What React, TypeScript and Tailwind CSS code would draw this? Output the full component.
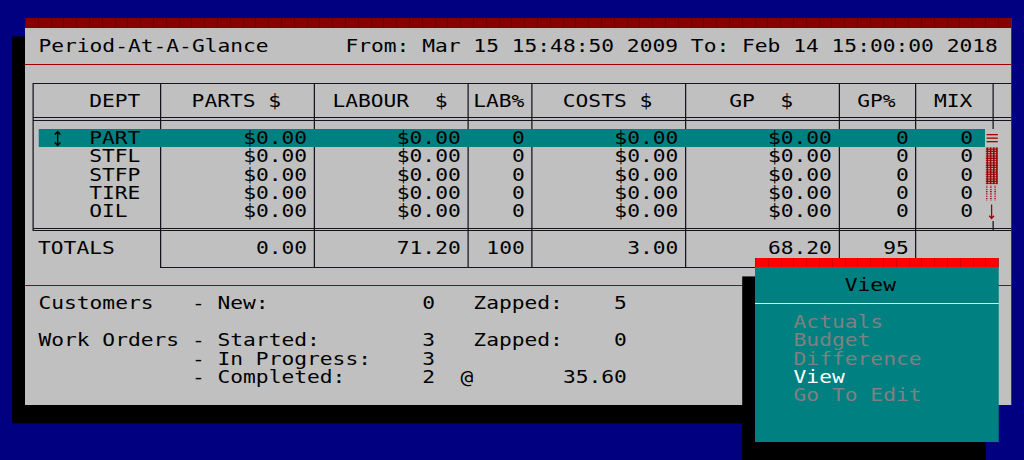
import clsx from "clsx";

// text-mode screen: 80x25 cells. Built at 10.24px per cell and stretched 1.25x wide,
// so every cell ends up 12.8 x 18.4 like the original.
const L = "border-[#17131d]";

const cols = [
  { w: "w-[102.4px]", head: "DEPT", hp: "pl-[44.8px]" },
  { w: "w-[122.88px]", head: "PARTS $", hp: "pl-[24.32px]" },
  { w: "w-[122.88px]", head: "LABOUR  $", hp: "pl-[14.08px]" },
  { w: "w-[51.2px]", head: "LAB%", hp: "pl-[3.84px]" },
  { w: "w-[122.88px]", head: "COSTS $", hp: "pl-[24.32px]" },
  { w: "w-[122.88px]", head: "GP  $", hp: "pl-[34.56px]" },
  { w: "w-[61.44px]", head: "GP%", hp: "pl-[14.08px]" },
  { w: "w-[62.72px]", head: "MIX", hp: "pl-[14.08px]" },
];

const depts = ["PART", "STFL", "STFP", "TIRE", "OIL"];
const totals = ["TOTALS", "0.00", "71.20", "100", "3.00", "68.20", "95", ""];

function RedRule() {
  return (
    <div className="h-[18.4px] shrink-0 pt-[8.6px]">
      <div className="h-[1.2px] bg-[#a00000]" />
    </div>
  );
}

// a strip of the table where only the column lines show
function LineStrip({ h, double }: { h: string; double?: boolean }) {
  return (
    <div className={clsx("flex", h, double && "border-y-[1.2px]", L)}>
      {cols.map((c, i) => (
        <div
          key={i}
          className={clsx(c.w, "border-l-[1.28px]", L, i === 7 && "border-r-[1.28px]")}
        />
      ))}
    </div>
  );
}

function UpDown() {
  return (
    <svg viewBox="0 0 12.8 18.4" preserveAspectRatio="none" className="h-[18.4px] w-[10.24px]">
      <path d="M6.4 2.6V16.4M3.6 5.4L6.4 2.6L9.2 5.4M3.6 13.6L6.4 16.4L9.2 13.6" stroke="#000" strokeWidth="1.4" fill="none" />
    </svg>
  );
}

function ScrollBar() {
  return (
    <svg
      viewBox="0 0 12.8 92"
      preserveAspectRatio="none"
      className="absolute left-[762.88px] top-[8px] h-[92px] w-[10.24px]"
    >
      <defs>
        <pattern id="dark" width="3.2" height="2.3" patternUnits="userSpaceOnUse">
          <rect width="3.2" height="2.3" fill="#9c0000" />
          <rect width="1.6" height="1.15" fill="#c0c0c0" />
        </pattern>
        <pattern id="light" width="4.27" height="2.3" patternUnits="userSpaceOnUse">
          <rect x="0.8" width="1.6" height="1.15" fill="#a00000" />
        </pattern>
      </defs>
      <rect width="12.8" height="92" fill="#c0c0c0" />
      <rect x="1.6" y="5" width="11.2" height="1.3" fill="#a00000" />
      <rect x="1.6" y="8.5" width="11.2" height="1.3" fill="#a00000" />
      <rect x="1.6" y="12" width="11.2" height="1.3" fill="#a00000" />
      <rect x="0.8" y="18.4" width="12" height="36.8" fill="url(#dark)" />
      <rect x="0.8" y="56.4" width="12" height="15" fill="url(#light)" />
      <path d="M6.6 75.5V89.5M4.2 86.8L6.6 89.5L9 86.8" stroke="#a00000" strokeWidth="1.3" fill="none" />
    </svg>
  );
}

function Table() {
  return (
    <div className="h-[202.4px] shrink-0 pl-[5.12px] pt-[9.2px]">
      {/* header */}
      <div className={clsx("flex h-[34.5px] border-t-[1.2px]", L)}>
        {cols.map((c, i) => (
          <div
            key={i}
            className={clsx(c.w, c.hp, "border-l-[1.28px] pt-[8px]", L, i === 7 && "border-r-[1.28px]")}
          >
            {c.head}
          </div>
        ))}
      </div>
      <LineStrip h="h-[3.5px]" double />

      {/* body */}
      <div className="relative">
        <LineStrip h="h-[8px]" />
        {depts.map((d, r) => {
          const sel = r === 0;
          return (
            <div key={d} className="relative flex h-[18.4px]">
              {sel && <div className="absolute inset-y-0 left-[5.12px] w-[757.76px] bg-[#008080]" />}
              <div className={clsx("relative flex w-[102.4px] border-l-[1.28px]", L)}>
                {sel ? (
                  <>
                    <span className="ml-[14.08px]">
                      <UpDown />
                    </span>
                    <span className="ml-[20.48px]">{d}</span>
                  </>
                ) : (
                  <span className="pl-[44.8px]">{d}</span>
                )}
              </div>
              {cols.slice(1).map((c, i) => (
                <div
                  key={i}
                  className={clsx(
                    "relative border-l-[1.28px] text-right",
                    c.w,
                    sel ? "border-transparent" : L,
                    i === 6 ? "border-r-[1.28px] border-r-transparent pr-[15.4px]" : "pr-[5.12px]"
                  )}
                >
                  {i === 2 || i >= 5 ? "0" : "$0.00"}
                </div>
              ))}
            </div>
          );
        })}
        <LineStrip h="h-[6.9px]" />
        <ScrollBar />
      </div>

      <LineStrip h="h-[3.5px]" double />

      {/* totals */}
      <div className="flex h-[36.8px]">
        {cols.map((c, i) => (
          <div
            key={i}
            className={clsx(
              c.w,
              "border-l-[1.28px] pt-[8px]",
              i === 0 ? "border-transparent pl-[3.84px]" : L,
              i > 0 && i < 7 && "border-b-[1.2px] pr-[5.12px] text-right"
            )}
          >
            {totals[i]}
          </div>
        ))}
      </div>
    </div>
  );
}

function Window() {
  return (
    <div className="flex h-[386.4px] w-[788.48px] flex-col whitespace-pre bg-[#c0c0c0] shadow-[-10.24px_18.4px_0_0_#000]">
      <div className="h-[9.2px] shrink-0 bg-[repeating-linear-gradient(90deg,#6a0000_0px,#6a0000_0.8px,#860000_0.8px,#860000_10.24px)]" />
      <div className="h-[9.2px] shrink-0" />
      <div className="grid h-[18.4px] shrink-0 grid-cols-[repeat(77,10.24px)]">
        <span className="col-start-2">Period-At-A-Glance</span>
        <span className="col-start-26">From: Mar 15 15:48:50 2009 To: Feb 14 15:00:00 2018</span>
      </div>
      <RedRule />
      <Table />
      <RedRule />

      <div className="grid h-[18.4px] shrink-0 grid-cols-[repeat(77,10.24px)]">
        <span className="col-start-2">Customers</span>
        <span className="col-start-14">- New:</span>
        <span className="col-start-32">0</span>
        <span className="col-start-36">Zapped:</span>
        <span className="col-start-47">5</span>
      </div>
      <div className="h-[18.4px] shrink-0" />
      <div className="grid h-[18.4px] shrink-0 grid-cols-[repeat(77,10.24px)]">
        <span className="col-start-2">Work Orders</span>
        <span className="col-start-14">- Started:</span>
        <span className="col-start-32">3</span>
        <span className="col-start-36">Zapped:</span>
        <span className="col-start-47">0</span>
      </div>
      <div className="grid h-[18.4px] shrink-0 grid-cols-[repeat(77,10.24px)]">
        <span className="col-start-14">- In Progress:</span>
        <span className="col-start-32">3</span>
      </div>
      <div className="grid h-[18.4px] shrink-0 grid-cols-[repeat(77,10.24px)]">
        <span className="col-start-14">- Completed:</span>
        <span className="col-start-32">2</span>
        <span className="col-start-35">@</span>
        <span className="col-start-43">35.60</span>
      </div>
    </div>
  );
}

const menuItems = [
  { t: "Actuals", on: false },
  { t: "Budget", on: false },
  { t: "Difference", on: false },
  { t: "View", on: true },
  { t: "Go To Edit", on: false },
];

function ViewMenu() {
  return (
    <div className="absolute left-[604.16px] top-[257.6px] flex h-[184px] w-[194.56px] flex-col whitespace-pre bg-[#008080] shadow-[-10.24px_18.4px_0_0_#000]">
      <div className="h-[9.2px] shrink-0 bg-[repeating-linear-gradient(90deg,#d40000_0px,#d40000_0.8px,#ff0000_0.8px,#ff0000_10.24px)]" />
      <div className="h-[9.2px] shrink-0" />
      <div className="grid h-[18.4px] shrink-0 grid-cols-[repeat(19,10.24px)]">
        <span className="col-start-8">View</span>
      </div>
      <div className="h-[18.4px] shrink-0 pt-[8.4px]">
        <div className="h-[1.6px] bg-[#dff2f2]" />
      </div>
      {menuItems.map((m) => (
        <div key={m.t} className="grid h-[18.4px] shrink-0 grid-cols-[repeat(19,10.24px)]">
          <span className={clsx("col-start-4", m.on ? "text-white" : "text-[#808080]")}>{m.t}</span>
        </div>
      ))}
    </div>
  );
}

export default function App() {
  return (
    <div className="h-[460px] w-[1024px] overflow-hidden bg-[#000080]">
      <div className="relative h-[460px] w-[819.2px] origin-top-left scale-x-125 pl-[20.48px] pt-[18.4px] font-['DejaVu_Sans_Mono',monospace] text-[17px] leading-[18.4px] text-black">
        <Window />
        <ViewMenu />
      </div>
    </div>
  );
}
